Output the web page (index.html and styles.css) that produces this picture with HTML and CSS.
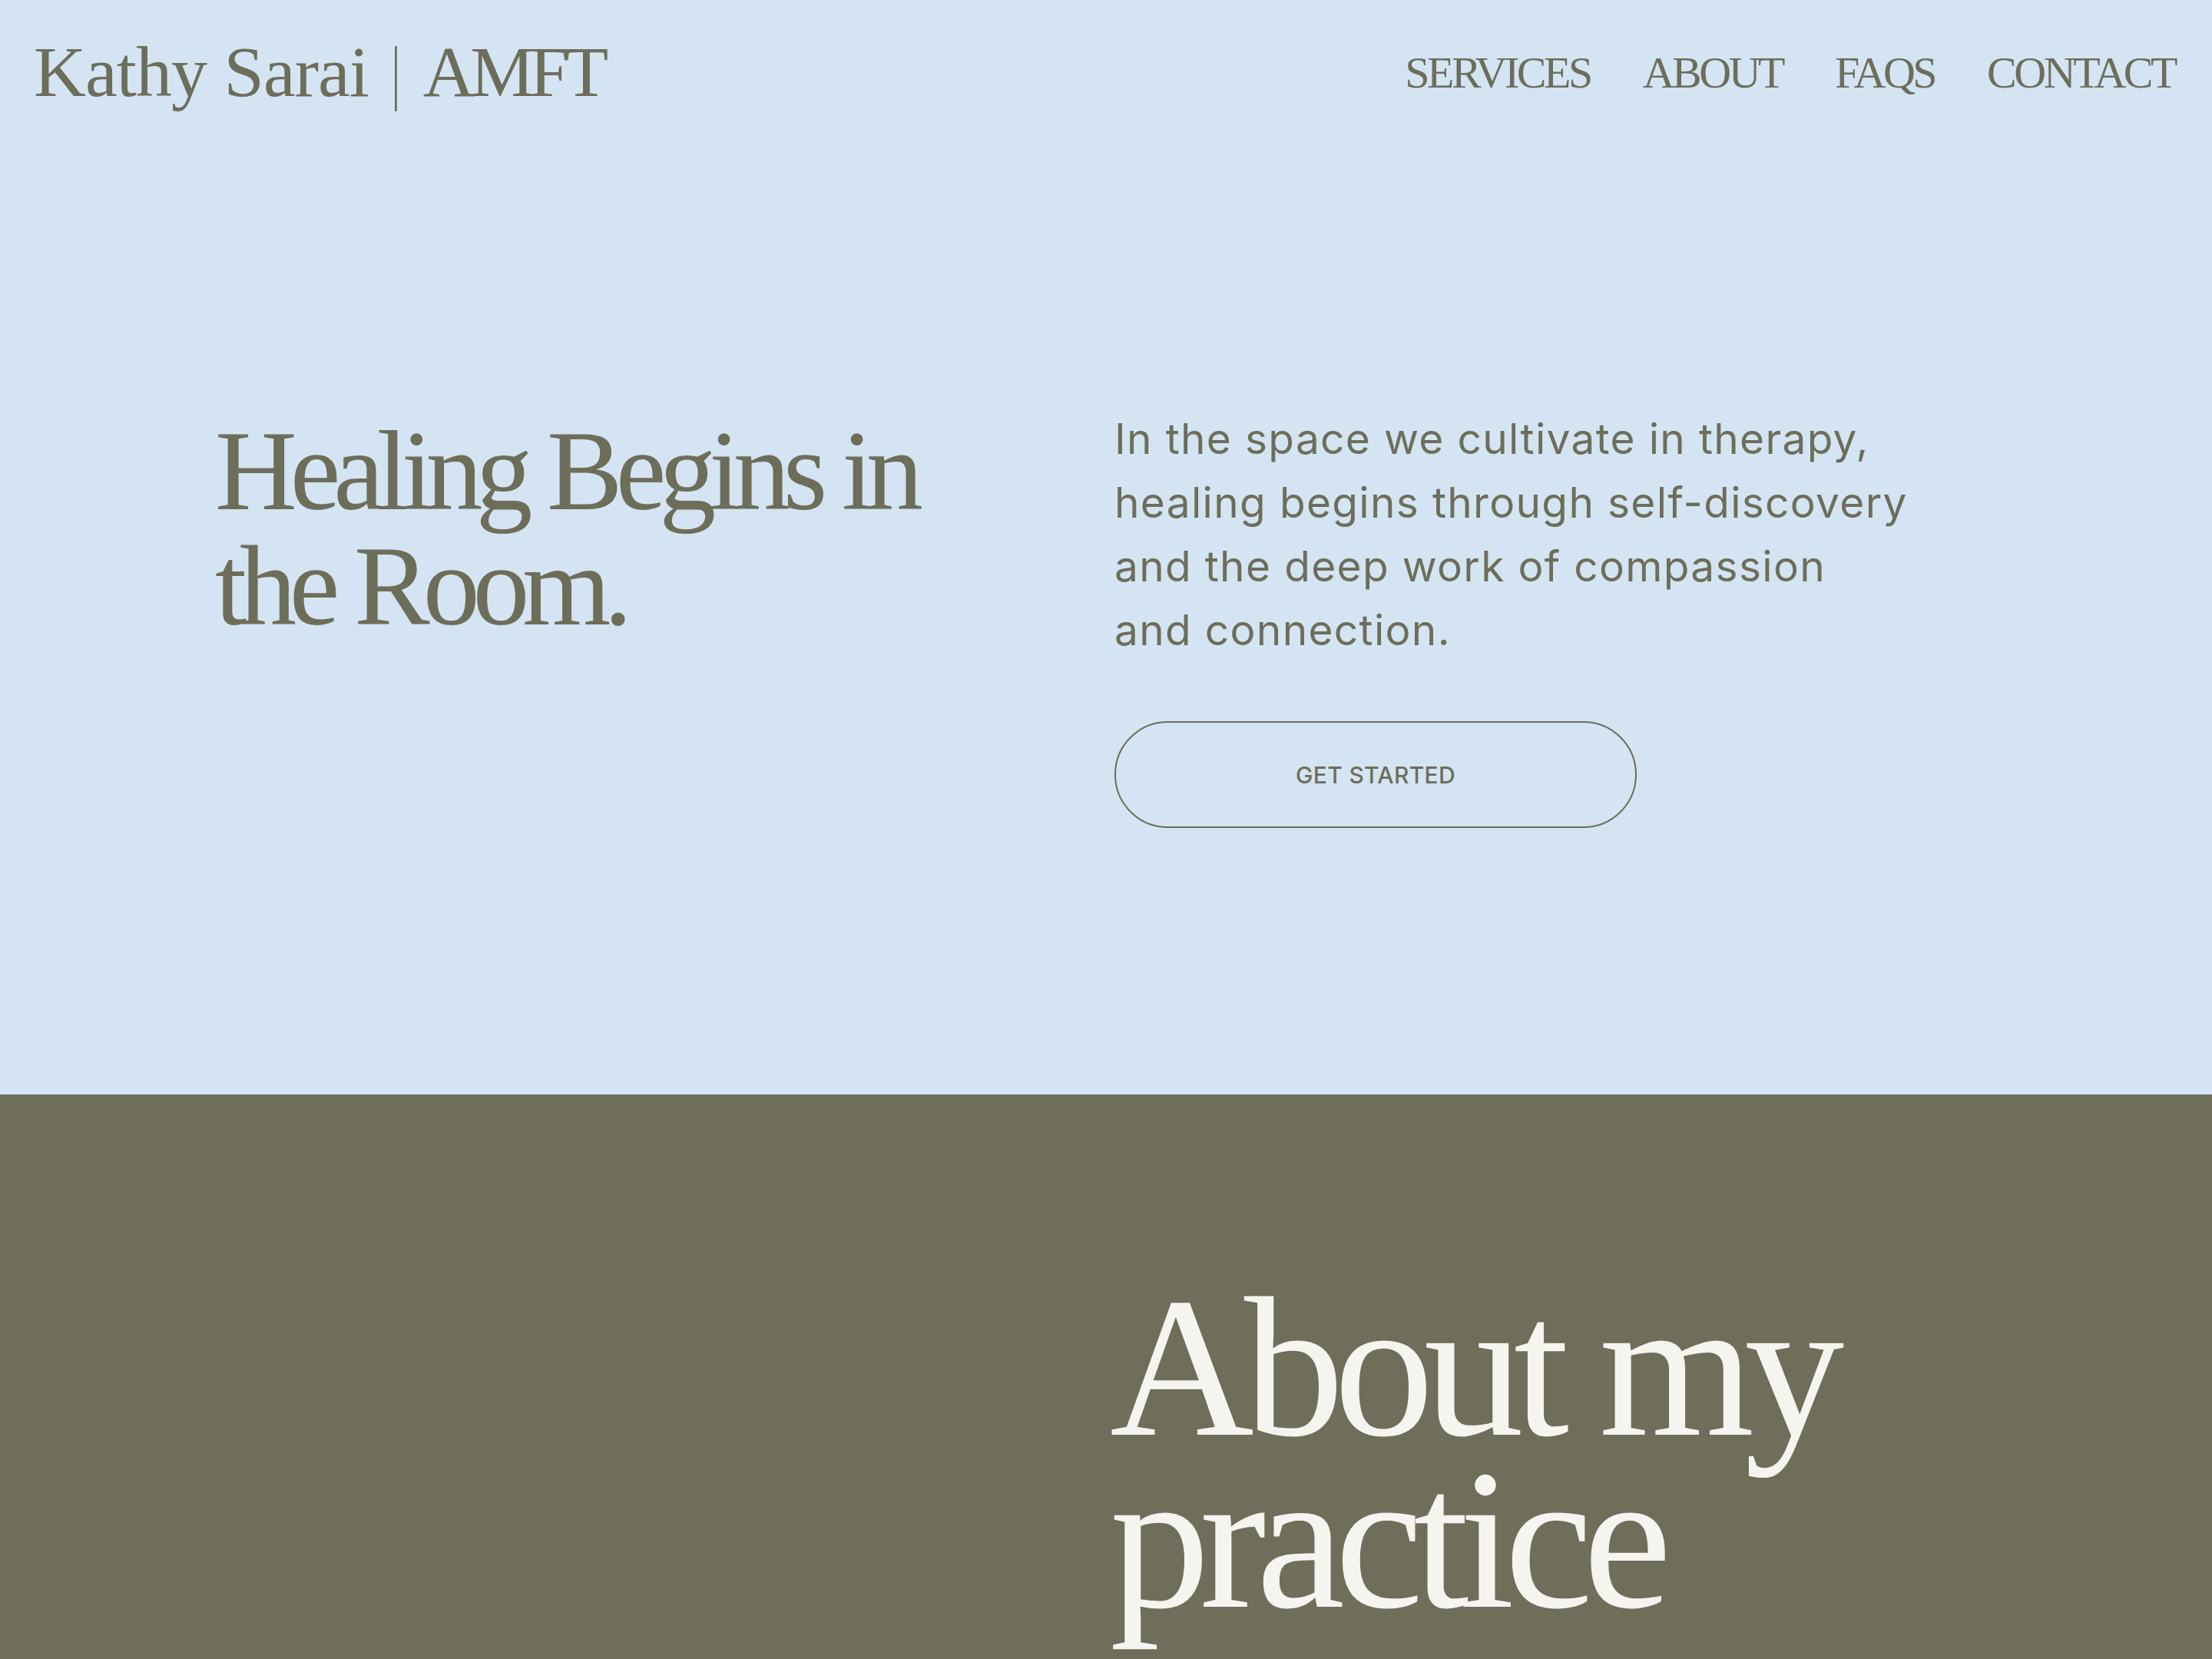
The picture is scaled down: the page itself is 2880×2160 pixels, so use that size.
FILE: index.html
```html
<!DOCTYPE html>
<html lang="en">
<head>
<meta charset="utf-8">
<title>Kathy Sarai | AMFT</title>
<link rel="stylesheet" href="styles.css">
</head>
<body>
<header class="site-header">
  <a class="logo" href="#"><span class="logo-name">Kathy Sarai</span><span class="logo-bar">|</span><span class="logo-title">AMFT</span></a>
  <nav class="nav">
    <a href="#">SERVICES</a>
    <a href="#">ABOUT</a>
    <a href="#">FAQS</a>
    <a href="#">CONTACT</a>
  </nav>
</header>
<section class="hero">
  <h1 class="hero-title">Healing Begins in<br>the Room.</h1>
  <div class="hero-copy">
    <p class="hero-text">In the space we cultivate in therapy,<br>healing begins through self-discovery<br>and the deep work of compassion<br>and connection.</p>
    <a class="btn" href="#">GET STARTED</a>
  </div>
</section>
<section class="about">
  <div class="about-media"></div>
  <h2 class="about-title">About my<br>practice</h2>
</section>
</body>
</html>
```
FILE: styles.css
```css
html, body {
  margin: 0;
  padding: 0;
}
body {
  background: #d4e4f3;
  color: #6d6e5a;
  font-family: "Liberation Serif", "Times New Roman", serif;
}
a {
  color: inherit;
  text-decoration: none;
}
.site-header {
  display: flex;
  justify-content: space-between;
  align-items: center;
  height: 186px;
  padding: 0 48px 0 44px;
  box-sizing: border-box;
}
.logo {
  font-size: 94px;
  line-height: 1;
  white-space: nowrap;
  display: flex;
  align-items: center;
}
.logo-name {
  letter-spacing: -0.01em;
}
.logo-title {
  letter-spacing: -0.07em;
}
.logo-bar {
  display: inline-block;
  margin: 0 26px;
  transform: scaleX(0.6);
}
.nav {
  display: flex;
  gap: 68px;
  font-size: 58px;
  letter-spacing: -0.06em;
  line-height: 1;
  padding-top: 4px;
}
.hero {
  display: grid;
  grid-template-columns: 1171px 1fr;
  padding: 344px 0 347px 280px;
}
.hero-title {
  margin: 0;
  padding-top: 8px;
  font-weight: 400;
  font-size: 148px;
  line-height: 150px;
  letter-spacing: -0.062em;
}
.hero-copy {
  display: flex;
  flex-direction: column;
  align-items: flex-start;
}
.hero-text {
  margin: 0;
  font-family: "Inter", "Liberation Sans", sans-serif;
  font-size: 55px;
  line-height: 83px;
  font-weight: 400;
  letter-spacing: 0.024em;
}
.btn {
  margin-top: 77px;
  display: flex;
  align-items: center;
  justify-content: center;
  width: 680px;
  height: 139px;
  box-sizing: border-box;
  border: 2px solid #6d6e5a;
  border-radius: 70px;
  font-family: "Inter", "Liberation Sans", sans-serif;
  font-weight: 500;
  font-size: 30px;
  letter-spacing: 0.01em;
}
.about {
  background: #6e6e5b;
  color: #f6f4ee;
  display: grid;
  grid-template-columns: 1165px 1fr;
  padding: 243px 0 220px 280px;
}
.about-title {
  margin: 0;
  font-weight: 400;
  font-size: 260px;
  line-height: 224px;
  letter-spacing: -0.05em;
}
```
